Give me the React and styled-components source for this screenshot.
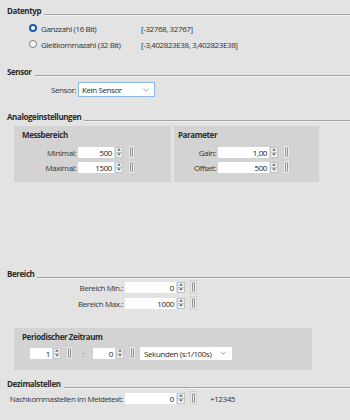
import React from 'react';
import styled, { createGlobalStyle } from 'styled-components';

const GlobalStyle = createGlobalStyle`
  html, body {
    margin: 0;
    padding: 0;
    background: #e3e3e3;
  }
`;

const Page = styled.div`
  width: 350px;
  height: 420px;
  overflow: hidden;
  box-sizing: border-box;
  padding: 6px 0 0 7px;
  background: #e3e3e3;
  font-family: 'Open Sans', 'Noto Sans', sans-serif;
  font-size: 8px;
  letter-spacing: -0.4px;
  color: #333;
`;

const Heading = styled.div`
  display: flex;
  align-items: flex-end;
  height: 10px;
  margin-top: ${(p) => p.$top || 0}px;
  line-height: 10px;
  font-weight: 700;
  color: #2b2b2b;

  & span {
    padding-right: 3px;
    white-space: nowrap;
  }
`;

const Rule = styled.div`
  flex: 1;
  height: 0;
  border-top: 1px solid #a2a2a2;
  border-bottom: 1px solid #f2f2f2;
`;

const RadioRow = styled.div`
  display: flex;
  align-items: center;
  height: 16px;
  margin-left: 22px;
  margin-top: ${(p) => p.$top || 0}px;
`;

const RadioOption = styled.label`
  display: flex;
  align-items: center;
  gap: 4px;
  width: 112px;
  color: #333;
`;

const RadioDot = styled.span`
  box-sizing: border-box;
  width: 8px;
  height: 8px;
  border-radius: 50%;
  background: ${(p) => (p.$checked ? '#fff' : '#fbfbfb')};
  border: ${(p) => (p.$checked ? '2.5px solid #1c5aa5' : '1px solid #7d7d7d')};
`;

const Range = styled.span`
  color: #333;
`;

const Row = styled.div`
  display: flex;
  align-items: center;
  margin-top: ${(p) => p.$top || 0}px;
  margin-left: ${(p) => p.$indent || 0}px;
`;

const Label = styled.span`
  width: ${(p) => p.$width}px;
  margin-right: ${(p) => p.$gap ?? 2}px;
  text-align: right;
  white-space: nowrap;
  color: #363636;
`;

const Select = styled.div`
  box-sizing: border-box;
  display: flex;
  align-items: center;
  justify-content: space-between;
  width: ${(p) => p.$width}px;
  height: ${(p) => p.$height || 15}px;
  margin-left: ${(p) => p.$left || 0}px;
  padding: 0 5px 0 3px;
  background: #fff;
  border: 1px solid ${(p) => (p.$focus ? '#8dbbe8' : '#fff')};
  color: #2a2a2a;
`;

const Input = styled.div`
  box-sizing: border-box;
  width: ${(p) => p.$width}px;
  height: 11px;
  line-height: 11px;
  padding-right: 2px;
  text-align: right;
  background: #fff;
  border-right: 1px solid #cfe3f4;
  color: #222;
`;

const Spinner = styled.div`
  box-sizing: border-box;
  display: flex;
  flex-direction: column;
  width: 8px;
  height: 11px;
  background: #f1f1f1;
  border: 1px solid #c4c4c4;

  & span {
    flex: 1;
    display: flex;
    align-items: center;
    justify-content: center;
  }
  & span + span {
    border-top: 1px solid #c4c4c4;
  }
`;

const Bracket = styled.div`
  box-sizing: border-box;
  display: flex;
  align-items: center;
  justify-content: center;
  width: 7px;
  height: 14px;
  margin-left: 5px;
  background: #ececec;
  border: 1px solid #d0d0d0;
`;

const Colon = styled.span`
  width: 20px;
  text-align: center;
  color: #777;
`;

const Panels = styled.div`
  display: flex;
  gap: 3px;
  margin: 4px 0 0 7px;
`;

const Panel = styled.div`
  box-sizing: border-box;
  width: ${(p) => p.$width}px;
  height: ${(p) => p.$height}px;
  margin-top: ${(p) => p.$top || 0}px;
  margin-left: ${(p) => p.$left || 0}px;
  padding: 3px 0 0 ${(p) => p.$pad ?? 8}px;
  background: #d3d3d3;
`;

const PanelTitle = styled.div`
  height: 11px;
  line-height: 11px;
  margin-bottom: ${(p) => p.$gap || 0}px;
  font-weight: 700;
  color: #2f2f2f;
`;

const Note = styled.span`
  margin-left: 13px;
  color: #333;
`;

const Chevron = () => (
  <svg width="6" height="4" viewBox="0 0 6 4">
    <path d="M0.5 0.8 L3 3.2 L5.5 0.8" fill="none" stroke="#8a8a8a" strokeWidth="0.8" />
  </svg>
);

const Arrow = ({ up }) => (
  <svg width="4" height="3" viewBox="0 0 4 3">
    <path d={up ? 'M0 2.6 L2 0.4 L4 2.6 Z' : 'M0 0.4 L2 2.6 L4 0.4 Z'} fill="#555" />
  </svg>
);

const BracketIcon = () => (
  <svg width="3" height="10" viewBox="0 0 3 10">
    <rect x="0.5" y="0.5" width="2" height="9" rx="0.8" fill="none" stroke="#6a6a6a" strokeWidth="0.7" />
  </svg>
);

const Stepper = ({ inputWidth, value }) => (
  <>
    <Input $width={inputWidth}>{value}</Input>
    <Spinner>
      <span><Arrow up /></span>
      <span><Arrow /></span>
    </Spinner>
    <Bracket>
      <BracketIcon />
    </Bracket>
  </>
);

const NumberField = ({ label, labelWidth, inputWidth, value, top }) => (
  <Row $top={top}>
    <Label $width={labelWidth}>{label}</Label>
    <Stepper inputWidth={inputWidth} value={value} />
  </Row>
);

export default function App() {
  return (
    <>
      <GlobalStyle />
      <Page>
        <Heading>
          <span>Datentyp</span>
          <Rule />
        </Heading>
        <RadioRow $top={4}>
          <RadioOption>
            <RadioDot $checked />
            Ganzzahl (16 Bit)
          </RadioOption>
          <Range>[-32768, 32767]</Range>
        </RadioRow>
        <RadioRow>
          <RadioOption>
            <RadioDot />
            Gleitkommazahl (32 Bit)
          </RadioOption>
          <Range>[-3,402823E38, 3,402823E38]</Range>
        </RadioRow>

        <Heading $top={15}>
          <span>Sensor</span>
          <Rule />
        </Heading>
        <Row $top={5}>
          <Label $width={69}>Sensor:</Label>
          <Select $width={77} $focus>
            Kein Sensor
            <Chevron />
          </Select>
        </Row>

        <Heading $top={15}>
          <span>Analogeinstellungen</span>
          <Rule />
        </Heading>
        <Panels>
          <Panel $width={157} $height={56}>
            <PanelTitle $gap={5}>Messbereich</PanelTitle>
            <NumberField label="Minimal:" labelWidth={54} inputWidth={37} value="500" />
            <NumberField label="Maximal:" labelWidth={54} inputWidth={37} value="1500" top={1} />
          </Panel>
          <Panel $width={145} $height={56} $pad={4}>
            <PanelTitle $gap={5}>Parameter</PanelTitle>
            <NumberField label="Gain:" labelWidth={38} inputWidth={52} value="1,00" />
            <NumberField label="Offset:" labelWidth={38} inputWidth={52} value="500" top={1} />
          </Panel>
        </Panels>

        <Heading $top={87}>
          <span>Bereich</span>
          <Rule />
        </Heading>
        <NumberField label="Bereich Min.:" labelWidth={116} inputWidth={52} value="0" top={1} />
        <NumberField label="Bereich Max.:" labelWidth={116} inputWidth={52} value="1000" top={2} />

        <Panel $width={298} $height={42} $top={18} $left={7}>
          <PanelTitle $gap={4}>Periodischer Zeitraum</PanelTitle>
          <Row $indent={8}>
            <Stepper inputWidth={23} value="1" />
            <Colon>:</Colon>
            <Stepper inputWidth={23} value="0" />
            <Select $width={92} $height={13} $left={4}>
              Sekunden (s:1/100s)
              <Chevron />
            </Select>
          </Row>
        </Panel>

        <Heading $top={9}>
          <span>Dezimalstellen</span>
          <Rule />
        </Heading>
        <Row $top={2}>
          <NumberField label="Nachkommastellen im Meldetext:" labelWidth={116} inputWidth={52} value="0" />
          <Note>+12345</Note>
        </Row>
      </Page>
    </>
  );
}
